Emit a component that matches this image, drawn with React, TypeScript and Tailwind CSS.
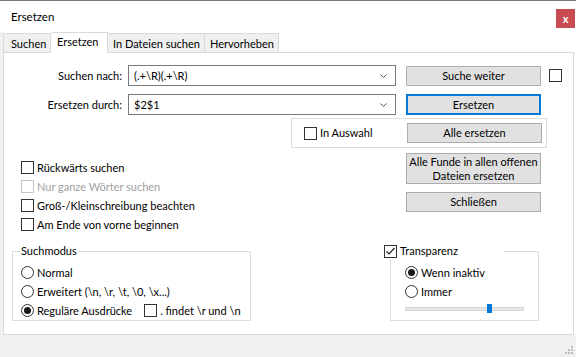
import React from "react";

function Box({ checked = false, disabled = false }: { checked?: boolean; disabled?: boolean }) {
  return (
    <span
      className={`inline-flex items-center justify-center w-[13px] h-[13px] shrink-0 border bg-white ${
        disabled ? "border-[#c4c4c4]" : "border-[#333333]"
      }`}
    >
      {checked && (
        <svg width="11" height="11" viewBox="0 0 11 11">
          <polyline points="1.5,5.5 4,8 9.5,2" fill="none" stroke="#222" strokeWidth="1.2" />
        </svg>
      )}
    </span>
  );
}

function Radio({ checked = false }: { checked?: boolean }) {
  return (
    <span className="inline-flex items-center justify-center w-[13px] h-[13px] shrink-0 rounded-full border border-[#333333] bg-white">
      {checked && <span className="w-[7px] h-[7px] rounded-full bg-[#1a1a1a]" />}
    </span>
  );
}

function Check({ label, disabled = false }: { label: string; disabled?: boolean }) {
  return (
    <div className="flex items-center h-[19px]">
      <Box disabled={disabled} />
      <span className={`ml-[3px] ${disabled ? "text-[#a0a0a0]" : ""}`}>{label}</span>
    </div>
  );
}

function Btn({ children, h = "h-[20px]", primary = false }: { children: React.ReactNode; h?: string; primary?: boolean }) {
  return (
    <button
      className={`w-[135px] ${h} flex flex-col items-center justify-center leading-[14px] bg-[#e1e1e1] ${
        primary ? "border-2 border-[#0078d7]" : "border border-[#adadad]"
      }`}
    >
      {children}
    </button>
  );
}

function Combo({ value }: { value: string }) {
  return (
    <div className="ml-[6px] w-[268px] h-[21px] border border-[#7a7a7a] bg-white flex items-center pl-[5px] pr-[8px]">
      <span>{value}</span>
      <svg className="ml-auto" width="7" height="4" viewBox="0 0 7 4">
        <polyline points="0.5,0.5 3.5,3.5 6.5,0.5" fill="none" stroke="#555" strokeWidth="1" />
      </svg>
    </div>
  );
}

export default function App() {
  return (
    <div
      className="w-[576px] h-[357px] bg-white border-t border-[#7a7a7a] flex flex-col overflow-hidden text-[11px] leading-[16px] text-black whitespace-nowrap"
      style={{ fontFamily: "Lato, 'Noto Sans', sans-serif" }}
    >
      {/* title bar */}
      <div className="h-[31px] flex items-start justify-between shrink-0">
        <span className="ml-[11px] mt-[8px] text-[11.5px]">Ersetzen</span>
        <button className="mt-[8px] mr-[1px] w-[19px] h-[19px] bg-[#c74b50] text-white text-[11px] font-bold leading-none flex items-center justify-center">
          x
        </button>
      </div>

      <div className="flex flex-col border-l-[3px] border-[#f0f0f0]">
        {/* tabs */}
        <div className="flex items-end h-[20px]">
          <div className="w-[48px] h-[19px] border border-b-0 border-[#d9d9d9] bg-[#f0f0f0] pl-[7px] pt-[2px]">Suchen</div>
          <div className="relative z-10 -mb-px w-[57px] h-[21px] border border-l-0 border-b-0 border-[#d9d9d9] bg-white pl-[6px] pt-[1px]">
            Ersetzen
          </div>
          <div className="w-[97px] h-[19px] border border-l-0 border-b-0 border-[#d9d9d9] bg-[#f0f0f0] pl-[5px] pt-[2px]">
            In Dateien suchen
          </div>
          <div className="w-[74px] h-[19px] border border-l-0 border-b-0 border-[#d9d9d9] bg-[#f0f0f0] pl-[5px] pt-[2px]">
            Hervorheben
          </div>
        </div>

        {/* panel */}
        <div className="w-[571px] h-[283px] border border-[#d9d9d9] bg-white flex flex-col">
          <div className="mt-[12px] flex items-center h-[21px]">
            <span className="w-[118px] text-right">Suchen nach:</span>
            <Combo value={"(.+\\R)(.+\\R)"} />
            <div className="ml-[10px]">
              <Btn>Suche weiter</Btn>
            </div>
            <div className="ml-[8px] flex">
              <Box />
            </div>
          </div>
          <div className="mt-[8px] flex items-center h-[21px]">
            <span className="w-[118px] text-right">Ersetzen durch:</span>
            <Combo value="$2$1" />
            <div className="ml-[10px]">
              <Btn h="h-[21px]" primary>
                Ersetzen
              </Btn>
            </div>
          </div>
          <div className="mt-[3px] ml-[287px] w-[256px] h-[30px] border border-[#dcdcdc] flex items-center">
            <div className="ml-[12px] flex items-center">
              <Box />
              <span className="ml-[3px]">In Auswahl</span>
            </div>
            <div className="ml-auto mr-[4px]">
              <Btn>Alle ersetzen</Btn>
            </div>
          </div>

          <div className="flex h-[95px]">
            <div className="w-[385px] pl-[17px] pt-[10px] flex flex-col">
              <Check label="Rückwärts suchen" />
              <Check label="Nur ganze Wörter suchen" disabled />
              <Check label="Groß-/Kleinschreibung beachten" />
              <Check label="Am Ende von vorne beginnen" />
            </div>
            <div className="ml-[17px] pt-[5px] flex flex-col gap-[8px]">
              <Btn h="h-[31px]">
                <span>Alle Funde in allen offenen</span>
                <span>Dateien ersetzen</span>
              </Btn>
              <Btn>Schließen</Btn>
            </div>
          </div>

          <div className="flex items-start">
            <fieldset className="ml-[8px] w-[239px] h-[78px] border border-[#dcdcdc] pl-[8px]">
              <legend className="ml-[-1px] px-[1px] leading-[16px]">Suchmodus</legend>
              <div className="pt-[4px] flex flex-col">
                <div className="flex items-center h-[19px]">
                  <Radio />
                  <span className="ml-[3px]">Normal</span>
                </div>
                <div className="flex items-center h-[19px]">
                  <Radio />
                  <span className="ml-[3px]">{"Erweitert (\\n, \\r, \\t, \\0, \\x...)"}</span>
                </div>
                <div className="flex items-center h-[19px]">
                  <Radio checked />
                  <span className="ml-[3px]">Reguläre Ausdrücke</span>
                  <span className="ml-[12px] flex items-center">
                    <Box />
                    <span className="ml-[3px]">{". findet \\r und \\n"}</span>
                  </span>
                </div>
              </div>
            </fieldset>

            <fieldset className="ml-[139px] w-[149px] h-[78px] border border-[#dcdcdc] pl-[14px]">
              <legend className="ml-[-21px] w-[120px] flex items-center leading-[16px] bg-white">
                <Box checked />
                <span className="ml-[3px]">Transparenz</span>
              </legend>
              <div className="pt-[4px] flex flex-col">
                <div className="flex items-center h-[19px]">
                  <Radio checked />
                  <span className="ml-[3px]">Wenn inaktiv</span>
                </div>
                <div className="flex items-center h-[19px]">
                  <Radio />
                  <span className="ml-[3px]">Immer</span>
                </div>
                <div className="relative mt-[3px] w-[119px] h-[9px] flex items-center">
                  <div className="w-full h-[4px] bg-[#e7e7e7] border border-[#d6d6d6]" />
                  <div className="absolute left-[82px] top-0 w-[5px] h-[9px] bg-[#0078d7]" />
                </div>
              </div>
            </fieldset>
          </div>
        </div>
      </div>

      {/* bottom strip with size grip */}
      <div className="flex-1 bg-[#f0f0f0] flex items-end justify-end">
        <svg className="mb-[2px] mr-[2px]" width="9" height="9" viewBox="0 0 9 9">
          <rect x="6" y="0" width="2" height="2" fill="#bdbdbd" />
          <rect x="3" y="3" width="2" height="2" fill="#bdbdbd" />
          <rect x="6" y="3" width="2" height="2" fill="#bdbdbd" />
          <rect x="0" y="6" width="2" height="2" fill="#bdbdbd" />
          <rect x="3" y="6" width="2" height="2" fill="#bdbdbd" />
          <rect x="6" y="6" width="2" height="2" fill="#bdbdbd" />
        </svg>
      </div>
    </div>
  );
}
